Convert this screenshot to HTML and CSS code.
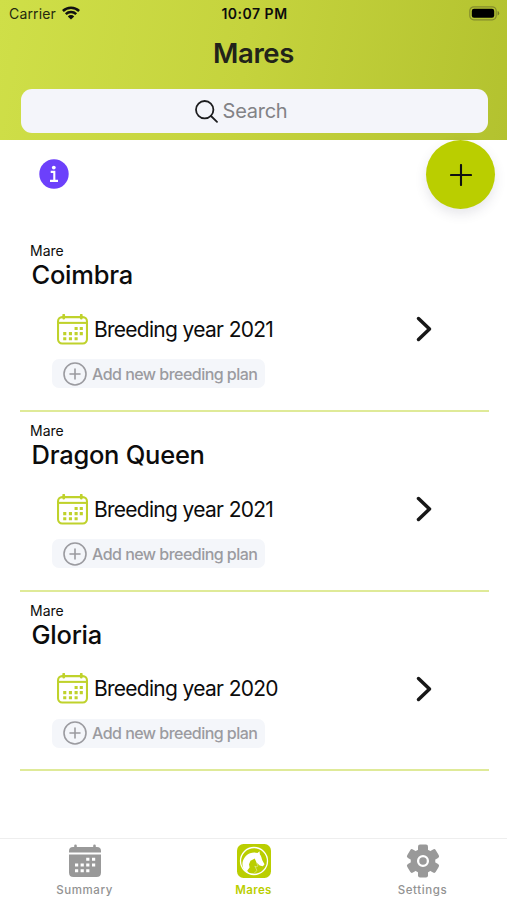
FILE: index.html
```html
<!DOCTYPE html>
<html lang="en">
<head>
<meta charset="utf-8">
<title>Mares</title>
<link rel="stylesheet" href="styles.css">
</head>
<body>
<svg class="defs" aria-hidden="true">
  <symbol id="calendar" viewBox="0 0 30 30">
    <path d="M6.5 1v3M23.5 1v3" fill="none" stroke="currentColor" stroke-width="2.6" stroke-linecap="round"/>
    <rect x="1" y="3" width="28" height="25.5" rx="4" fill="none" stroke="currentColor" stroke-width="2"/>
    <path d="M1 8.6h28" stroke="currentColor" stroke-width="2"/>
    <path d="M17 14h3M22 14h3M6 19h3M11.5 19h3M17 19h3M22 19h3M6 24h3M11.5 24h3M17 24h3" stroke="currentColor" stroke-width="3"/>
  </symbol>
  <symbol id="plus-circle" viewBox="0 0 24 24">
    <circle cx="12" cy="12" r="11" fill="none" stroke="currentColor" stroke-width="1.6"/>
    <path d="M12 7v10M7 12h10" stroke="currentColor" stroke-width="1.6" stroke-linecap="round"/>
  </symbol>
  <symbol id="chevron" viewBox="0 0 16 26">
    <path d="M2.500 2.500 13.500 13 2.500 23.500" fill="none" stroke="currentColor" stroke-width="3.500" stroke-linecap="round" stroke-linejoin="round"/>
  </symbol>
</svg>
<header class="header">
  <div class="status">
    <div class="carrier"><span>Carrier</span>
      <svg width="18" height="14" viewBox="0 0 18 14" fill="none" stroke="#111" stroke-width="2.5"><path d="M.9 5a11.5 11.5 0 0 1 16.2 0M3.8 8.2a7.4 7.4 0 0 1 10.4 0"/><path d="M9 13.6 5.8 10.4a4.5 4.5 0 0 1 6.4 0z" fill="#111" stroke="none"/></svg>
    </div>
    <div class="time">10:07 PM</div>
    <svg class="battery" width="31" height="15" viewBox="0 0 31 15"><rect x=".8" y=".8" width="26.4" height="13" rx="4" fill="none" stroke="#848c2d" stroke-width="1.2"/><rect x="2.8" y="2.8" width="22.4" height="9" rx="2.2"/><path d="M28.6 5v4.600q1.600-.6 1.600-2.300t-1.600-2.300" fill="#747c25"/></svg>
  </div>
  <h1 class="title">Mares</h1>
  <div class="search">
    <svg width="23" height="23" viewBox="0 0 23 23" fill="none" stroke="#1c1c1e" stroke-width="1.8" stroke-linecap="round"><circle cx="9.7" cy="9.7" r="8.7"/><path d="m16 16 6 5.8"/></svg>
    <span>Search</span>
  </div>
</header>
<div class="tools">
  <svg class="info" width="30" height="30" viewBox="0 0 30 30"><circle cx="15" cy="15" r="14.7" fill="#6c40fb"/><circle cx="14.8" cy="8.6" r="1.9" fill="#fff"/><path d="M11.7 12.900h3.600v8.700M11 21.900h8" fill="none" stroke="#fff" stroke-width="2.100"/></svg>
  <button class="add"><svg width="22" height="22" viewBox="0 0 22 22"><path d="M11 1v20M1 11h20" stroke="#111" stroke-width="2.1" stroke-linecap="round"/></svg></button>
</div>
<main class="list">
  <section class="mare">
    <div class="kind">Mare</div>
    <h2 class="name">Coimbra</h2>
    <div class="plan"><svg class="cal"><use href="#calendar"/></svg><span class="year">Breeding year 2021</span><svg class="chev"><use href="#chevron"/></svg></div>
    <button class="new"><svg class="pc"><use href="#plus-circle"/></svg><span>Add new breeding plan</span></button>
  </section>
  <section class="mare">
    <div class="kind">Mare</div>
    <h2 class="name">Dragon Queen</h2>
    <div class="plan"><svg class="cal"><use href="#calendar"/></svg><span class="year">Breeding year 2021</span><svg class="chev"><use href="#chevron"/></svg></div>
    <button class="new"><svg class="pc"><use href="#plus-circle"/></svg><span>Add new breeding plan</span></button>
  </section>
  <section class="mare">
    <div class="kind">Mare</div>
    <h2 class="name">Gloria</h2>
    <div class="plan"><svg class="cal"><use href="#calendar"/></svg><span class="year">Breeding year 2020</span><svg class="chev"><use href="#chevron"/></svg></div>
    <button class="new"><svg class="pc"><use href="#plus-circle"/></svg><span>Add new breeding plan</span></button>
  </section>
</main>
<nav class="tabs">
  <a class="tab">
    <svg width="34" height="34" viewBox="0 0 34 34"><path d="M7.5 1.8v3M26.500 1.8v3" stroke="#999" stroke-width="2.6" stroke-linecap="round"/><path d="M1 8.500V7q0-4 4-4h24q4 0 4 4v1.500zM1 10.500h32V28.500q0 4.500-4.500 4.500h-23Q1 33 1 28.500z" fill="#999"/><path d="M18.200 15.300h3.200M24 15.300h3.200M7 21h3.200M12.600 21h3.200M18.200 21h3.200M24 21h3.200M7 26.700h3.200M12.600 26.700h3.200M18.200 26.700h3.200" stroke="#fff" stroke-width="3"/></svg>
    <span>Summary</span>
  </a>
  <a class="tab active">
    <svg width="34" height="34" viewBox="0 0 34 34"><rect width="34" height="34" rx="6.500" fill="#bace00"/><circle cx="17" cy="17" r="13.500" fill="none" stroke="#fff" stroke-width="1.300"/><path d="M6.500 25C3.500 19 7 11.500 13 9.200c3-1.100 5.500-.9 7.500-.2l2-1.700.4 3.200c1.500 1.500 1.700 4 2.500 6l2.100 3.700-1.600 2-3.200-.8-3.200-2.800-1.800-4-2.200 1.200-2 1-1.500 3.400.6 3.300-2.400 3.200 2 2.800C10 29 8 27.500 6.500 25z" fill="#fff"/><path d="m19.500 18.500 1.300 3.200-1 1.300-2-.8 2.200 4.300-3.500 3.300-3.500-.3" fill="none" stroke="#fff" stroke-width=".8" opacity=".5"/></svg>
    <span>Mares</span>
  </a>
  <a class="tab">
    <svg width="34" height="34" viewBox="0 0 34 34"><circle cx="17" cy="17" r="12.300" fill="#999"/><g fill="#999"><rect x="12" y=".5" width="10" height="33" rx="2"/><rect x="12" y=".5" width="10" height="33" rx="2" transform="rotate(60 17 17)"/><rect x="12" y=".5" width="10" height="33" rx="2" transform="rotate(120 17 17)"/></g><circle cx="17" cy="17" r="4.900" fill="none" stroke="#fff" stroke-width="2.300"/></svg>
    <span>Settings</span>
  </a>
</nav>
</body>
</html>
```
FILE: styles.css
```css
* { box-sizing: border-box; }
body { margin: 0; height: 900px; overflow: hidden; display: flex; flex-direction: column; background: #fff; color: #0c0c0c; font-family: Inter, "Liberation Sans", sans-serif; }
svg { display: block; flex: none; }
h1, h2 { margin: 0; }
button { border: 0; padding: 0; font: inherit; }
.defs { width: 0; height: 0; position: absolute; }
.header { height: 140px; flex: none; background: linear-gradient(100deg, #cfdf48, #c5d33d 48%, #b3c22f); }
.status { height: 27px; padding: 0 7px 0 9px; display: grid; grid-template-columns: 1fr auto 1fr; align-items: center; font-size: 14px; }
.carrier { display: flex; gap: 6px; align-items: center; color: #25290e; letter-spacing: 0.15px; }
.carrier svg { margin-top: -2px; }
.time { font-weight: 600; letter-spacing: 0.5px; }
.battery { justify-self: end; margin-top: 0; }
.title { height: 50px; line-height: 52px; text-align: center; font-size: 27.5px; font-weight: 600; color: #22231a; letter-spacing: -0.4px; }
.search { height: 44px; margin: 12px 19.5px 0 20.5px; border-radius: 11px; background: #f4f5fa; color: #828286; display: flex; align-items: center; justify-content: center; gap: 5px; font-size: 20px; letter-spacing: -0.25px; padding-right: 26px; }
.tools { height: 101px; flex: none; padding: 0 12px 0 38.5px; display: flex; justify-content: space-between; align-items: flex-start; }
.info { margin-top: 18.500px; }
.add { width: 69px; height: 69px; border-radius: 50%; background: #bace00; display: grid; place-items: center; box-shadow: 0 5px 12px rgba(60, 60, 90, 0.13); }
.list { flex: 1; padding: 0 18.500px 0 19.500px; }
.mare { height: 179.600px; border-bottom: 2px solid #dfea98; padding: 10px 0 0 10.500px; }
.mare:first-child { height: 171px; padding-top: 1.400px; }
.kind { height: 17px; line-height: 17px; font-size: 14px; }
.name { height: 30px; line-height: 31px; margin-left: 1.500px; font-size: 25.500px; font-weight: 500; letter-spacing: -0.25px; }
.plan { height: 36px; margin-top: 22px; padding: 0 57px 0 27px; display: flex; align-items: center; }
.cal { width: 31px; height: 31px; color: #bfd22b; }
.year { margin-left: 6px; font-size: 21px; letter-spacing: -0.75px; word-spacing: 0.4px; white-space: nowrap; }
.chev { width: 16px; height: 26px; margin-left: auto; color: #171717; }
.new { width: 213px; height: 29px; margin: 12px 0 0 22px; padding-left: 11px; border-radius: 7px; background: #f4f6fa; color: #9b9ba0; display: flex; align-items: center; gap: 5px; font-size: 16px; font-weight: 500; letter-spacing: -0.53px; white-space: nowrap; }
.pc { width: 24px; height: 24px; }
.tabs { height: 62px; flex: none; border-top: 1px solid #eee; display: grid; grid-template-columns: repeat(3, 1fr); }
.tab { display: flex; flex-direction: column; align-items: center; padding-top: 5px; color: #929292; font-size: 11.500px; font-weight: 500; letter-spacing: 0.6px; }
.tab span { line-height: 14px; margin-top: 5px; }
.active { color: #bace00; font-weight: 600; letter-spacing: 0.4px; }
```
